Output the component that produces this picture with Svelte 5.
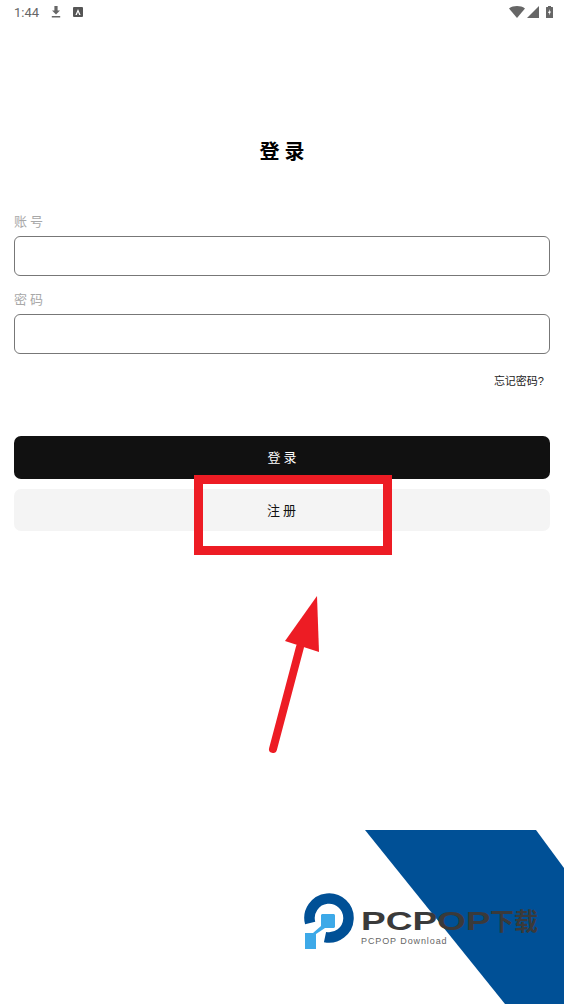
<script lang="ts">
	let account = $state('');
	let password = $state('');
</script>

<div class="screen">
	<header class="status-bar">
		<div class="status-left">
			<span class="time">1:44</span>
			<svg width="10" height="12" viewBox="0 0 10 12" aria-hidden="true">
				<path d="M3.4 0h3.2v4.4H9L5 8.6 1 4.4h2.4zM.8 10h8.4v1.4H.8z" fill="#666" />
			</svg>
			<svg width="10" height="10" viewBox="0 0 10 10" aria-hidden="true">
				<rect width="10" height="10" rx="1" fill="#555" />
				<path d="M5 2 7.6 8H6.2L5 5 3.8 8H2.4z" fill="#fff" />
			</svg>
		</div>
		<div class="status-right">
			<svg width="16" height="12" viewBox="0 0 16 12" aria-hidden="true">
				<path d="M0 2.4C4.500-.8 11.500-.8 16 2.400L8 12z" fill="#666" />
			</svg>
			<svg width="12" height="12" viewBox="0 0 12 12" aria-hidden="true">
				<path d="M12 0v12H0z" fill="#666" />
			</svg>
			<svg width="7" height="12" viewBox="0 0 7 12" aria-hidden="true">
				<path d="M2 0h3v1h1.500c.3 0 .5.200.5.500V12H0V1.500c0-.3.200-.5.500-.5H2z" fill="#666" />
				<path d="M4 3 2 7h1.300L3 9.500 5 5.500H3.700z" fill="#fff" />
			</svg>
		</div>
	</header>

	<main class="login">
		<h1>登录</h1>

		<label class="field">
			<span>账号</span>
			<input bind:value={account} type="text" />
		</label>
		<label class="field second">
			<span>密码</span>
			<input bind:value={password} type="password" />
		</label>

		<a class="forgot" href="#forgot">忘记密码?</a>

		<button class="primary">登录</button>
		<button class="secondary">注册</button>
	</main>

	<div class="highlight"></div>

	<svg class="arrow" width="60" height="165" viewBox="0 0 60 165" aria-hidden="true">
		<path d="M5 159 32 57" stroke="#ed1c24" stroke-width="8" stroke-linecap="round" fill="none" />
		<path d="M49 6 17 51 51 62z" fill="#ed1c24" />
	</svg>

	<div class="watermark">
		<svg class="banner" width="199" height="174" viewBox="0 0 199 174" aria-hidden="true">
			<path d="M0 0H171L199 38V174H140z" fill="#005096" />
		</svg>
		<svg class="mark" width="50" height="58" viewBox="0 0 50 58" aria-hidden="true">
			<path d="M6.150 30A19.500 19.500 0 1 1 21 44.100" fill="none" stroke="#005096" stroke-width="10.500" />
			<path d="M18.500 21h11c.8 0 1.500.7 1.500 1.500v11c0 .8-.7 1.500-1.500 1.500H21l-9 6v15H1V40h8l8-7V22.500c0-.8.700-1.500 1.500-1.500z" fill="#3da9e8" />
		</svg>
		<div class="brand">
			<div class="brand-name"><span class="brand-latin">PCPOP</span>下载</div>
			<div class="brand-sub">PCPOP Download</div>
		</div>
	</div>
</div>

<style>
	:global(body) {
		margin: 0;
		background: #ffffff;
	}

	.screen {
		position: relative;
		width: 564px;
		height: 1004px;
		overflow: hidden;
		background: #ffffff;
		font-family: 'Liberation Sans', 'Noto Sans CJK SC', sans-serif;
	}

	.status-bar {
		display: flex;
		align-items: center;
		justify-content: space-between;
		height: 24px;
		padding: 0 11px 0 14px;
	}

	.status-left,
	.status-right {
		display: flex;
		align-items: center;
	}

	.status-left {
		gap: 12px;
	}

	.status-right {
		gap: 2px;
	}

	.status-right svg:last-child {
		margin-left: 5px;
	}

	.time {
		color: #666666;
		font-family: Roboto, sans-serif;
		font-size: 13px;
	}

	.login {
		display: flex;
		flex-direction: column;
		padding: 0 14px;
	}

	h1 {
		margin: 114px 0 0;
		padding-left: 5px;
		color: #000000;
		font-size: 20px;
		font-weight: 700;
		line-height: 28px;
		letter-spacing: 5px;
		text-align: center;
	}

	.field {
		display: flex;
		flex-direction: column;
		gap: 4px;
		margin-top: 46px;
	}

	.field.second {
		margin-top: 14px;
	}

	.field span {
		color: #a8a8a8;
		font-size: 13px;
		line-height: 20px;
		letter-spacing: 3px;
	}

	input {
		box-sizing: border-box;
		width: 100%;
		height: 40px;
		border: 1px solid #777777;
		border-radius: 6px;
		outline: none;
		background: #ffffff;
		padding: 0 10px;
		font: inherit;
	}

	.forgot {
		align-self: flex-end;
		margin: 18px 6px 0 0;
		color: #222222;
		font-size: 11px;
		line-height: 18px;
		text-decoration: none;
	}

	button {
		height: 43px;
		border: 0;
		border-radius: 7px;
		padding: 0 0 3px 3px;
		font: inherit;
		font-size: 13px;
		letter-spacing: 3px;
	}

	.primary {
		margin-top: 46px;
		background: #111111;
		color: #ffffff;
	}

	.secondary {
		height: 42px;
		margin-top: 10px;
		padding: 0 0 1px 2px;
		background: #f4f4f4;
		color: #111111;
	}

	.highlight {
		position: absolute;
		top: 475px;
		left: 194px;
		box-sizing: border-box;
		width: 198px;
		height: 80px;
		border: 9px solid #ed1c24;
	}

	.arrow {
		position: absolute;
		top: 590px;
		left: 268px;
	}

	.watermark {
		position: absolute;
		inset: 0;
		pointer-events: none;
	}

	.banner {
		position: absolute;
		top: 830px;
		left: 365px;
	}

	.mark {
		position: absolute;
		top: 893px;
		left: 304px;
	}

	.brand {
		position: absolute;
		top: 906px;
		left: 361px;
	}

	.brand-name {
		color: #3a3a3a;
		font-size: 24px;
		font-weight: 700;
		line-height: 30px;
		white-space: nowrap;
	}

	.brand-latin {
		display: inline-block;
		width: 129px;
		font-size: 25px;
		transform: scaleX(1.48);
		transform-origin: left center;
	}

	.brand-sub {
		margin-top: -1px;
		color: #666666;
		font-size: 9px;
		line-height: 10px;
		letter-spacing: 0.9px;
		white-space: nowrap;
	}
</style>
